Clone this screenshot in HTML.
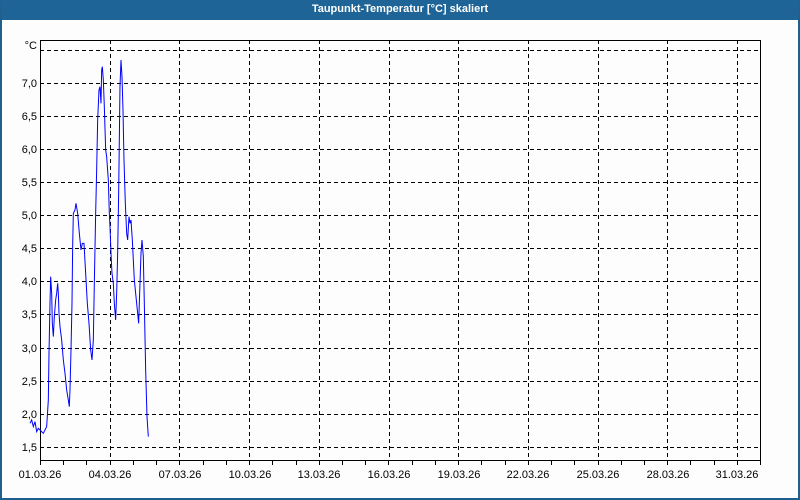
<!DOCTYPE html><html><head><style>
body{margin:0;width:800px;height:500px;overflow:hidden;background:#fff;font-family:"Liberation Sans",sans-serif}
.frame{position:absolute;left:0;top:0;width:796px;height:478px;border:2px solid #1e5f8e;border-top:20px solid #1e6496;background:#fdfdfd}
.title{position:absolute;left:0;top:0;width:800px;height:20px;line-height:19px;text-align:center;color:#fff;font-weight:bold;font-size:11px}
</style></head><body>
<div class="frame"></div>
<div class="title">Taupunkt-Temperatur [°C] skaliert</div>
<svg width="800" height="500" style="position:absolute;left:0;top:0" font-family="Liberation Sans, sans-serif" font-size="11">
<g stroke="#000" stroke-width="1" stroke-dasharray="4,3" shape-rendering="crispEdges">
<line x1="40" x2="760" y1="50.5" y2="50.5"/><line x1="40" x2="760" y1="83.5" y2="83.5"/><line x1="40" x2="760" y1="116.5" y2="116.5"/><line x1="40" x2="760" y1="149.5" y2="149.5"/><line x1="40" x2="760" y1="182.5" y2="182.5"/><line x1="40" x2="760" y1="215.5" y2="215.5"/><line x1="40" x2="760" y1="248.5" y2="248.5"/><line x1="40" x2="760" y1="281.5" y2="281.5"/><line x1="40" x2="760" y1="314.5" y2="314.5"/><line x1="40" x2="760" y1="348.5" y2="348.5"/><line x1="40" x2="760" y1="381.5" y2="381.5"/><line x1="40" x2="760" y1="414.5" y2="414.5"/><line x1="40" x2="760" y1="447.5" y2="447.5"/>
<line y1="40" y2="460" x1="110.5" x2="110.5"/><line y1="40" y2="460" x1="179.5" x2="179.5"/><line y1="40" y2="460" x1="249.5" x2="249.5"/><line y1="40" y2="460" x1="319.5" x2="319.5"/><line y1="40" y2="460" x1="389.5" x2="389.5"/><line y1="40" y2="460" x1="458.5" x2="458.5"/><line y1="40" y2="460" x1="528.5" x2="528.5"/><line y1="40" y2="460" x1="598.5" x2="598.5"/><line y1="40" y2="460" x1="667.5" x2="667.5"/><line y1="40" y2="460" x1="737.5" x2="737.5"/>
</g>
<rect x="40.5" y="40.5" width="720" height="420" fill="none" stroke="#000" shape-rendering="crispEdges"/>
<g stroke="#000" shape-rendering="crispEdges" id="ticks"></g>
<g fill="#000" text-anchor="end">
<text x="37" y="49">°C</text>
<text x="37" y="87">7,0</text><text x="37" y="120">6,5</text><text x="37" y="153">6,0</text><text x="37" y="186">5,5</text><text x="37" y="219">5,0</text><text x="37" y="252">4,5</text><text x="37" y="285">4,0</text><text x="37" y="318">3,5</text><text x="37" y="352">3,0</text><text x="37" y="385">2,5</text><text x="37" y="418">2,0</text><text x="37" y="451">1,5</text>
</g>
<g fill="#000" text-anchor="middle">
<text x="40" y="478">01.03.26</text><text x="110" y="478">04.03.26</text><text x="180" y="478">07.03.26</text><text x="250" y="478">10.03.26</text><text x="319" y="478">13.03.26</text><text x="389" y="478">16.03.26</text><text x="459" y="478">19.03.26</text><text x="528" y="478">22.03.26</text><text x="598" y="478">25.03.26</text><text x="668" y="478">28.03.26</text><text x="737" y="478">31.03.26</text>
</g>
<g transform="translate(30,40) scale(0.3333)">
<polyline fill="none" stroke="#0000ff" stroke-width="1" vector-effect="non-scaling-stroke" points="0,1150 5,1140 10,1160 15,1145 20,1175 25,1165 30,1170 40,1180 50,1160 55,1080 57,940 60,790 62,710 65,760 67,850 70,890 73,830 77,780 80,760 83,730 85,760 87,820 90,860 95,900 100,960 105,1000 110,1050 115,1080 118,1100 120,1050 123,930 126,790 128,620 130,520 135,510 138,490 143,520 148,580 153,630 157,610 162,610 167,700 172,790 177,850 182,930 186,960 190,900 193,730 197,520 200,390 203,240 207,150 210,140 213,190 215,90 217,80 220,120 223,200 227,330 230,350 235,420 238,520 240,560 243,640 246,700 250,730 253,790 257,840 260,760 263,640 266,460 270,140 273,60 276,110 279,210 282,360 286,490 290,580 293,600 297,530 300,550 303,540 307,600 310,660 313,720 317,760 322,810 326,850 330,730 333,640 336,600 340,650 343,790 347,990 351,1130 355,1190"/>
</g>
</svg>
<script>
var g=document.getElementById('ticks'),s='';
for(var i=0;i<=31;i++){var x=Math.round(40+i*23.23)+0.5;s+='<line x1="'+x+'" x2="'+x+'" y1="460" y2="465"/>';}
g.innerHTML=s;
</script>
</body></html>
